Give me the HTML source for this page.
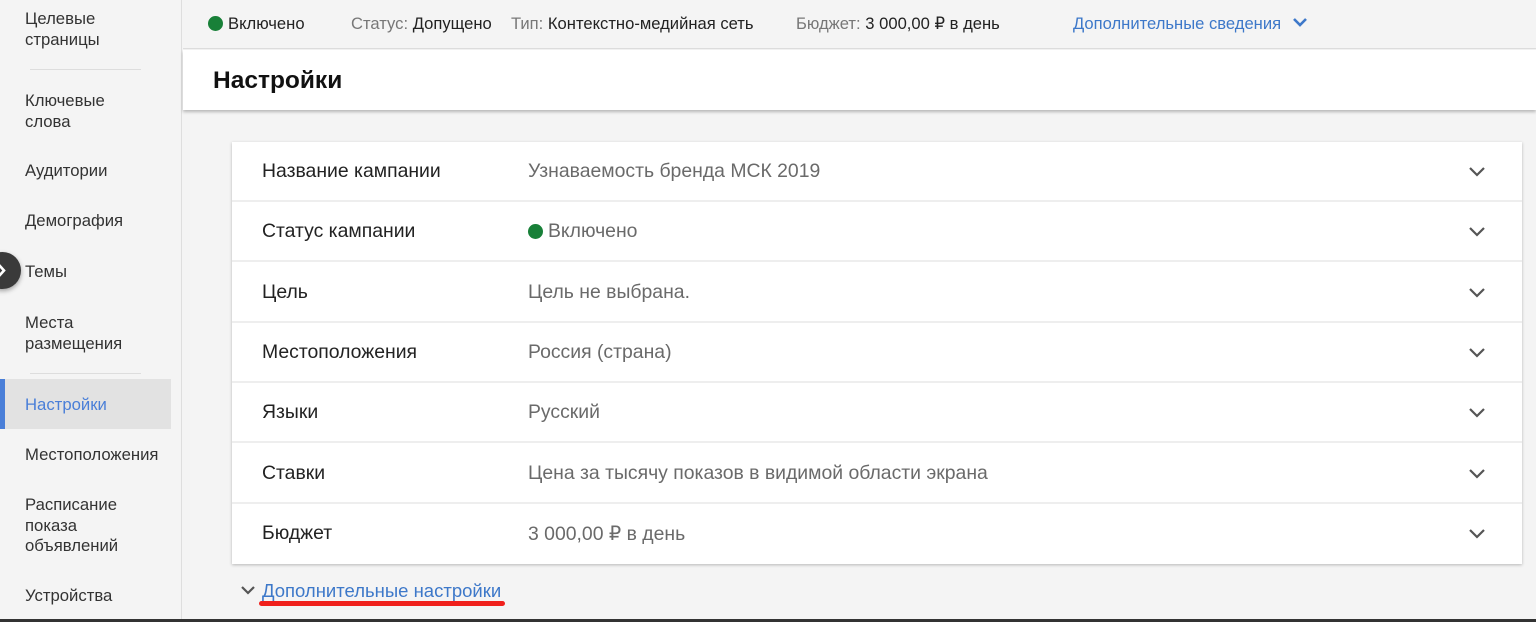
<!DOCTYPE html>
<html><head><meta charset="utf-8"><style>
*{box-sizing:border-box;margin:0;padding:0}
body{width:1536px;height:622px;overflow:hidden;background:#f4f4f4;font-family:"Liberation Sans","DejaVu Sans",sans-serif;color:#222;position:relative}
.side{position:absolute;left:0;top:0;width:182px;height:622px;background:#f4f4f4;border-right:1px solid #dedede}
.si{position:absolute;left:25px;font-size:16.7px;line-height:20.5px;color:#333;white-space:nowrap}
.sep{position:absolute;left:30px;width:111px;height:1px;background:#ddd}
.top{position:absolute;left:183px;top:0;right:0;height:49px;background:#f4f4f4;border-bottom:1px solid #ddd;font-size:16.6px}
.top span{position:absolute;top:14px;white-space:nowrap}
.g{color:#777}
.dot{display:inline-block;width:15px;height:15px;border-radius:50%;background:#188038;vertical-align:-2px;margin-right:5px}
.hdr{position:absolute;left:183px;top:50px;right:0;height:60px;background:#fff;box-shadow:0 2px 3px rgba(0,0,0,.25)}
.hdr h1{position:absolute;left:30px;top:17px;font-size:24.5px;font-weight:bold;color:#111}
.card{position:absolute;left:232px;top:142px;width:1290px;height:422px;background:#fff;box-shadow:0 1px 3px rgba(0,0,0,.25)}
.row{position:absolute;left:0;width:1290px;height:60px;border-bottom:2px solid #eee;font-size:19.4px}
.row .l{position:absolute;left:30px;top:18px;color:#222}
.row .v{position:absolute;left:296px;top:18px;color:#6a6a6a}
.row svg{position:absolute;left:1236px;top:24px}
</style></head><body>
<div class="side">
<div class="si" style="top:9px">Целевые<br>страницы</div>
<div class="sep" style="top:69px"></div>
<div class="si" style="top:91px">Ключевые<br>слова</div>
<div class="si" style="top:161px">Аудитории</div>
<div class="si" style="top:211px">Демография</div>
<div class="si" style="top:262px">Темы</div>
<div class="si" style="top:313px">Места<br>размещения</div>
<div class="sep" style="top:373px"></div>
<div style="position:absolute;left:0;top:379px;width:171px;height:50px;background:#e2e2e2;border-left:5px solid #4a7fd8"></div>
<div class="si" style="top:395px;color:#4a7fd8">Настройки</div>
<div class="si" style="top:445px">Местоположения</div>
<div class="si" style="top:495px">Расписание<br>показа<br>объявлений</div>
<div class="si" style="top:586px">Устройства</div>
</div>
<div style="position:absolute;left:-16px;top:252px;width:37px;height:37px;border-radius:50%;background:#3a3a3a;box-shadow:0 2px 5px rgba(0,0,0,.35)"><svg width="37" height="37" style="position:absolute;left:0;top:0"><path d="M15 13 L20 18.5 L15 24" stroke="#fff" stroke-width="2.6" fill="none"/></svg></div>
<div class="top">
<span style="left:25px;color:#222"><i class="dot"></i>Включено</span>
<span style="left:168px"><span class="g" style="position:static">Статус:</span> Допущено</span>
<span style="left:328px"><span class="g" style="position:static">Тип:</span> Контекстно-медийная сеть</span>
<span style="left:613px"><span class="g" style="position:static">Бюджет:</span> 3 000,00 ₽ в день</span>
<span style="left:890px;color:#3d78c9">Дополнительные сведения <svg width="16" height="12" style="margin-left:6px;vertical-align:0"><path d="M2 2 L8 8 L14 2" stroke="#3d78c9" stroke-width="2.6" fill="none"/></svg></span>
</div>
<div class="hdr"><h1>Настройки</h1></div>
<div class="card">
<div class="row" style="top:0"><span class="l">Название кампании</span><span class="v">Узнаваемость бренда МСК 2019</span><svg width="18" height="12"><path d="M2 2 L9 9 L16 2" stroke="#555" stroke-width="2.2" fill="none"/></svg></div>
<div class="row" style="top:60px"><span class="l">Статус кампании</span><span class="v"><i class="dot"></i>Включено</span><svg width="18" height="12"><path d="M2 2 L9 9 L16 2" stroke="#555" stroke-width="2.2" fill="none"/></svg></div>
<div class="row" style="top:121px"><span class="l">Цель</span><span class="v">Цель не выбрана.</span><svg width="18" height="12"><path d="M2 2 L9 9 L16 2" stroke="#555" stroke-width="2.2" fill="none"/></svg></div>
<div class="row" style="top:181px"><span class="l">Местоположения</span><span class="v">Россия (страна)</span><svg width="18" height="12"><path d="M2 2 L9 9 L16 2" stroke="#555" stroke-width="2.2" fill="none"/></svg></div>
<div class="row" style="top:241px"><span class="l">Языки</span><span class="v">Русский</span><svg width="18" height="12"><path d="M2 2 L9 9 L16 2" stroke="#555" stroke-width="2.2" fill="none"/></svg></div>
<div class="row" style="top:302px"><span class="l">Ставки</span><span class="v">Цена за тысячу показов в видимой области экрана</span><svg width="18" height="12"><path d="M2 2 L9 9 L16 2" stroke="#555" stroke-width="2.2" fill="none"/></svg></div>
<div class="row" style="top:362px;border:none"><span class="l">Бюджет</span><span class="v">3 000,00 ₽ в день</span><svg width="18" height="12"><path d="M2 2 L9 9 L16 2" stroke="#555" stroke-width="2.2" fill="none"/></svg></div>
</div>
<svg width="16" height="12" style="position:absolute;left:240px;top:585px"><path d="M2 2 L8 8 L14 2" stroke="#555" stroke-width="2.2" fill="none"/></svg>
<div style="position:absolute;left:262px;top:580px;font-size:18.5px;color:#3d78c9;white-space:nowrap">Дополнительные настройки</div>
<div style="position:absolute;left:259px;top:601px;width:246px;height:5px;border-radius:3px;background:#f0201c"></div>
<div style="position:absolute;left:0;top:619px;width:1536px;height:3px;background:#333"></div>
</body></html>
